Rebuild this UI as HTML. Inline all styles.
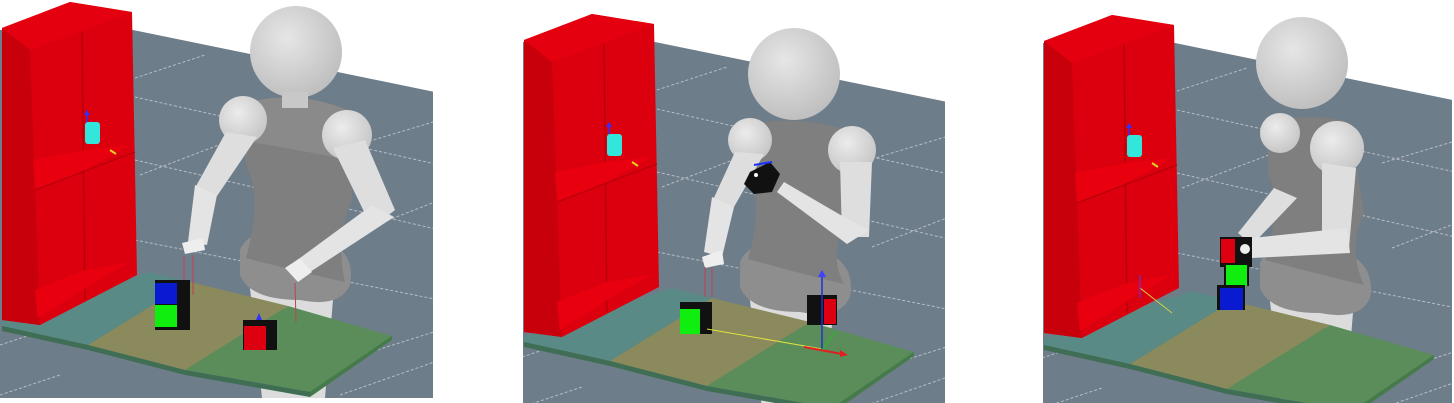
<!DOCTYPE html>
<html><head><style>
html,body{margin:0;padding:0;background:#fff;width:1454px;height:403px;overflow:hidden}
svg{display:block;overflow:hidden}
</style></head><body>
<svg width="1454" height="403" viewBox="0 0 1454 403" overflow="hidden">
<defs>
<radialGradient id="hd" cx="0.4" cy="0.35" r="0.7"><stop offset="0" stop-color="#e6e6e6"/><stop offset="1" stop-color="#bdbdbd"/></radialGradient>
<radialGradient id="sh" cx="0.4" cy="0.35" r="0.7"><stop offset="0" stop-color="#ececec"/><stop offset="1" stop-color="#c4c4c4"/></radialGradient>
<clipPath id="c1"><rect x="0" y="0" width="433" height="398"/></clipPath>
<clipPath id="c2"><rect x="523" y="0" width="422" height="403"/></clipPath>
<clipPath id="c3"><rect x="1043" y="0" width="409" height="403"/></clipPath>
<g id="scene">
  <polygon points="0,30 133,30 440,93 440,400 0,400" fill="#6e7d8a"/>
  <g stroke="#c8ced4" stroke-width="1" stroke-dasharray="3,2" fill="none" opacity="0.8">
    <line x1="135" y1="78" x2="205" y2="55"/>
    <line x1="135" y1="97" x2="440" y2="165"/>
    <line x1="135" y1="160" x2="440" y2="230"/>
    <line x1="135" y1="240" x2="440" y2="300"/>
    <line x1="140" y1="175" x2="245" y2="135"/>
    <line x1="340" y1="150" x2="440" y2="120"/>
    <line x1="350" y1="235" x2="440" y2="200"/>
    <line x1="0" y1="345" x2="30" y2="335"/>
    <line x1="0" y1="395" x2="60" y2="375"/>
    <line x1="330" y1="365" x2="440" y2="330"/>
    <line x1="340" y1="395" x2="440" y2="360"/>
  </g>
</g>
<g id="shelf">
  <polygon points="2,28 70,2 132,12 137,275 40,325 2,320" fill="#dc000e"/>
  <polygon points="2,28 70,2 132,12 30,50" fill="#e4000f"/>
  <polygon points="2,28 30,50 40,325 2,320" fill="#c8000c"/>
  <line x1="82" y1="32" x2="85" y2="300" stroke="#b8000a" stroke-width="1.5"/>
  <polygon points="33,160 85,150 130,145 85,170 35,190" fill="#e8000f"/>
  <line x1="35" y1="190" x2="135" y2="152" stroke="#b0000a" stroke-width="1"/>
  <polygon points="35,290 85,270 130,262 90,285 38,318" fill="#e8000f"/>
  <rect x="85" y="122" width="15" height="22" rx="3" fill="#33e6dc"/>
  <line x1="87" y1="122" x2="87" y2="113" stroke="#3030ff" stroke-width="1.5"/>
  <polygon points="84,115 87,110 90,115" fill="#3030ff"/>
  <line x1="110" y1="150" x2="116" y2="154" stroke="#e0d020" stroke-width="2"/>
</g>
<g id="table">
  <polygon points="2,322 150,275 392,337 310,394 2,330" fill="#4f7a60"/>
  <polygon points="2,320 150,272 190,282 88,345 2,326" fill="#5a8a86"/>
  <polygon points="88,345 190,282 288,306 185,370" fill="#8a8a5c"/>
  <polygon points="185,370 288,306 392,336 310,392" fill="#5b8d5b"/>
  <polygon points="2,326 88,345 185,370 310,392 310,397 185,375 88,350 2,331" fill="#3f6e55"/>
  <polygon points="310,392 392,336 392,340 310,397" fill="#457a4a"/>
</g>
<g id="robotbase">
  <path d="M248,270 L335,275 L325,398 L262,398 Z" fill="#dcdcdc"/>
  <path d="M240,250 Q250,225 300,232 Q358,242 350,285 Q340,308 300,300 Q250,300 240,275 Z" fill="#8e8e8e"/>
</g>
</defs>

<g clip-path="url(#c1)">
  <use href="#scene"/>
  <use href="#robotbase"/>
  <use href="#table"/>
  <use href="#shelf"/>
  <path d="M232,108 Q290,85 352,112 L352,200 Q335,240 345,282 Q300,272 246,258 Q262,200 248,170 Z" fill="#7f7f7f"/>
  <path d="M232,108 Q290,85 352,112 L348,160 Q300,150 238,140 Z" fill="#8a8a8a"/>
  <circle cx="296" cy="52" r="46" fill="url(#hd)"/>
  <rect x="282" y="92" width="26" height="16" fill="#c8c8c8"/>
  <circle cx="243" cy="120" r="24" fill="url(#sh)"/>
  <circle cx="347" cy="135" r="25" fill="url(#sh)"/>
  <path d="M226,132 L257,137 L217,196 L195,188 Z" fill="#dedede"/>
  <path d="M195,185 L217,195 L207,245 L188,242 Z" fill="#e4e4e4"/>
  <polygon points="182,243 203,238 205,250 185,254" fill="#eeeeee"/>
  <path d="M333,148 L365,140 L395,210 L372,228 Z" fill="#dedede"/>
  <path d="M372,205 L394,217 L310,272 L300,258 Z" fill="#e4e4e4"/>
  <polygon points="285,268 300,258 312,272 298,282" fill="#eeeeee"/>
  <g stroke="#c04050" stroke-width="1"><line x1="184" y1="256" x2="184" y2="285"/><line x1="193" y1="255" x2="193" y2="295"/><line x1="295" y1="283" x2="296" y2="322"/></g>
  <rect x="155" y="280" width="35" height="50" fill="#111"/>
  <rect x="155" y="283" width="22" height="21" fill="#0a1ad0"/>
  <rect x="155" y="305" width="22" height="22" fill="#10ee10"/>
  <rect x="243" y="320" width="34" height="30" fill="#111"/>
  <rect x="244" y="326" width="22" height="24" fill="#dd0010"/>
  <polygon points="256,320 259,313 262,320" fill="#3030ff"/>
</g>

<g clip-path="url(#c2)"><g transform="translate(522,12)">
  <use href="#scene"/>
  <use href="#robotbase" transform="translate(-22,0)"/>
  <use href="#table" transform="translate(0,4)"/>
  <use href="#shelf"/>
  <path d="M220,115 Q270,100 332,120 L327,200 Q305,240 322,272 Q280,262 226,247 Q242,190 226,160 Z" fill="#7f7f7f"/>
  <circle cx="272" cy="62" r="46" fill="url(#hd)"/>
  <circle cx="228" cy="128" r="22" fill="url(#sh)"/>
  <circle cx="330" cy="138" r="24" fill="url(#sh)"/>
  <path d="M213,140 L242,142 L212,195 L190,190 Z" fill="#dedede"/>
  <path d="M190,185 L212,195 L200,245 L182,240 Z" fill="#e4e4e4"/>
  <polygon points="180,245 200,238 202,252 183,256" fill="#eeeeee"/>
  <path d="M318,150 L350,150 L347,225 L320,225 Z" fill="#dedede"/>
  <path d="M322,205 L347,218 L325,232 L255,180 L262,170 Z" fill="#e4e4e4"/>
  <polygon points="228,160 248,150 258,162 250,180 232,182 222,172" fill="#111"/>
  <line x1="232" y1="153" x2="250" y2="150" stroke="#1a30ff" stroke-width="2"/>
  <circle cx="234" cy="163" r="2" fill="#fff"/>
  <g stroke="#c04050" stroke-width="1"><line x1="183" y1="255" x2="183" y2="285"/><line x1="190" y1="255" x2="190" y2="285"/></g>
  <rect x="158" y="290" width="32" height="32" fill="#111"/>
  <rect x="158" y="297" width="20" height="25" fill="#10ee10"/>
  <line x1="185" y1="317" x2="300" y2="337" stroke="#e0e040" stroke-width="1"/>
  <rect x="285" y="283" width="30" height="30" fill="#111"/>
  <rect x="302" y="287" width="12" height="25" fill="#dd0010"/>
  <line x1="300" y1="260" x2="300" y2="338" stroke="#2030d0" stroke-width="1.5"/>
  <polygon points="296,265 300,258 304,265" fill="#4040ff"/>
  <line x1="282" y1="335" x2="320" y2="342" stroke="#e02020" stroke-width="2"/>
  <polygon points="318,338 326,343 318,345" fill="#e02020"/>
  <line x1="300" y1="338" x2="313" y2="320" stroke="#20c020" stroke-width="1"/>
</g></g>

<g clip-path="url(#c3)"><g transform="translate(1042,13)">
  <use href="#scene"/>
  <use href="#robotbase" transform="translate(-22,0)"/>
  <use href="#table" transform="translate(0,6)"/>
  <use href="#shelf"/>
  <path d="M226,110 Q270,98 308,110 L322,200 Q305,235 322,272 Q280,262 223,247 Q240,190 226,160 Z" fill="#7f7f7f"/>
  <circle cx="260" cy="50" r="46" fill="url(#hd)"/>
  <circle cx="238" cy="120" r="20" fill="url(#sh)"/>
  <circle cx="295" cy="135" r="27" fill="url(#sh)"/>
  <path d="M232,175 L255,185 L210,232 L196,220 Z" fill="#dedede"/>
  <path d="M280,150 L314,155 L307,235 L280,230 Z" fill="#dedede"/>
  <path d="M305,215 L308,240 L210,245 L210,225 Z" fill="#e4e4e4"/>
  <rect x="178" y="224" width="32" height="30" fill="#111"/>
  <rect x="179" y="226" width="14" height="24" fill="#dd0010"/>
  <circle cx="203" cy="236" r="5" fill="#eee"/>
  <rect x="182" y="250" width="25" height="23" fill="#111"/>
  <rect x="184" y="252" width="21" height="21" fill="#10ee10"/>
  <rect x="175" y="272" width="28" height="25" fill="#111"/>
  <rect x="178" y="275" width="23" height="22" fill="#0a1ad0"/>
  <line x1="98" y1="275" x2="130" y2="300" stroke="#d0d040" stroke-width="1"/>
  <line x1="98" y1="262" x2="98" y2="285" stroke="#4040ff" stroke-width="1"/>
</g></g>
</svg>
</body></html>
